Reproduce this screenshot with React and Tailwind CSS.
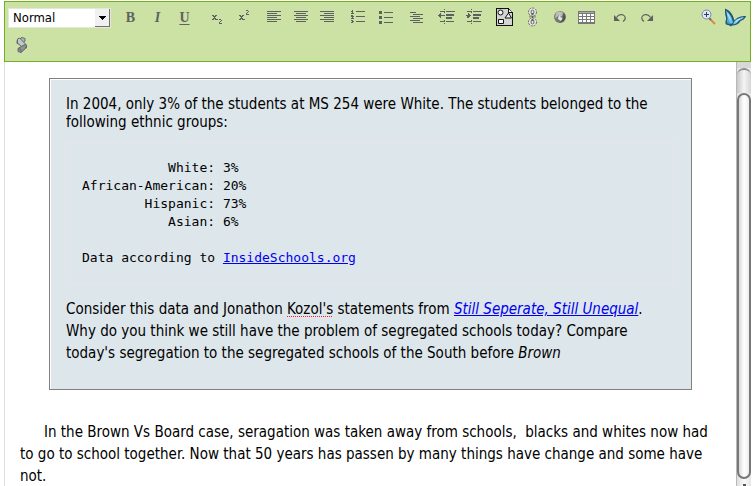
import React from "react";

const INK = "#5f6160";

function Tool({ label, children }) {
  return (
    <button type="button" aria-label={label} title={label} className="block h-[27px] w-[27px] shrink-0">
      <svg width="27" height="27" viewBox="0 0 27 27" shapeRendering="crispEdges" fill={INK}>
        {children}
      </svg>
    </button>
  );
}

/* Each bar is [x, y, width], one pixel tall. */
function Bars({ rows }) {
  return rows.map(([x, y, w]) => <rect key={x + "-" + y} x={x} y={y} width={w} height="1" />);
}

function Letter({ label, char, className }) {
  return (
    <button
      type="button"
      aria-label={label}
      className={"h-[27px] w-[27px] shrink-0 text-center font-['Liberation_Serif',serif] text-[14px] leading-[27px] font-bold text-[#5f6160] " + className}
    >
      {char}
    </button>
  );
}

function Two({ x, y }) {
  return <path d={`M${x} ${y}h2v1h1v1h-1v1h-1v1h2v1h-3v-2h1v-1h1v-1h-2z`} />;
}

function SmallX() {
  return <path d="M5 11h2v1h1v-1h2v1h-1v1h-1v1h1v1h2v1h-3v-1h-1v1h-2v-1h1v-1h1v-1h-1v-1h-1z" />;
}

function Indent({ label, flip }) {
  return (
    <Tool label={label}>
      <Bars rows={[[6, 7, 4], [12, 7, 9], [12, 10, 8], [12, 11, 8], [12, 13, 6], [12, 14, 6], [6, 17, 4], [12, 17, 8]]} />
      <path d="M10 5h1v1h-1zM10 7h1v2h-1zM10 16h1v2h-1zM10 19h1v1h-1z" />
      {flip ? (
        <path d="M5 11h2v-1h1v1h2v1h-2v1h-1v1h-1v-2h-1zM7 9h1v1h1v1h1v1h-1v1h-1v1h-1z" />
      ) : (
        <path d="M4 11h1v-1h1v-1h1v2h4v1h-4v2h-1v-1h-1v-1h-1z" />
      )}
    </Tool>
  );
}

function Toolbar() {
  return (
    <div role="toolbar" aria-label="Formatting" className="border border-[#72b01d] bg-[#cce2a5] pb-[3px]">
      <div className="flex items-start pt-[2px] pl-[3px]">
        <div className="relative mt-[4px] h-[20px] w-[103px] shrink-0 border border-[#e3e8da] bg-white">
          <select
            aria-label="Paragraph style"
            className="block h-[18px] w-full appearance-none pl-[4px] font-['DejaVu_Sans_Condensed','DejaVu_Sans',sans-serif] text-[13px] leading-[18px] text-black"
          >
            <option>Normal</option>
          </select>
          <span className="pointer-events-none absolute top-0 right-0 flex h-[18px] w-[15px] items-center justify-center border-r border-b border-[#6f6f6f] bg-[#f0f0f0]">
            <svg width="7" height="4" viewBox="0 0 7 4" shapeRendering="crispEdges">
              <path d="M0 0h7v1h-1v1h-1v1h-1v1h-1v-1h-1v-1h-1v-1h-1z" fill="#000" />
            </svg>
          </span>
        </div>
        <div className="ml-[6px] flex">
          <Letter label="Bold" char="B" className="" />
          <Letter label="Italic" char="I" className="italic" />
          <Letter label="Underline" char="U" className="underline underline-offset-2" />
        </div>
        <div className="ml-[6px] flex">
          <Tool label="Subscript">
            <g transform="translate(3 0)"><SmallX /><Two x={12} y={15} /></g>
          </Tool>
          <Tool label="Superscript">
            <g transform="translate(3 0)"><SmallX /><Two x={12} y={6} /></g>
          </Tool>
        </div>
        <div className="ml-[3px] flex">
          <Tool label="Align left">
            <Bars rows={[[6, 7, 14], [6, 9, 10], [6, 11, 14], [6, 13, 10], [6, 15, 14], [6, 17, 10]]} />
          </Tool>
          <Tool label="Align center">
            <Bars rows={[[6, 7, 14], [8, 9, 10], [6, 11, 14], [8, 13, 10], [6, 15, 14], [8, 17, 10]]} />
          </Tool>
          <Tool label="Align right">
            <Bars rows={[[5, 7, 14], [9, 9, 10], [5, 11, 14], [9, 13, 10], [5, 15, 14], [9, 17, 10]]} />
          </Tool>
        </div>
        <div className="ml-[3px] flex">
          <Tool label="Numbered list">
            <Bars rows={[[11, 7, 9], [11, 12, 9], [11, 17, 9]]} />
            <path d="M7 6h1v3h1v1h-3v-1h1v-1h-1v-1h1zM6 11h2v1h1v1h-1v1h1v1h-3v-1h1v-1h-1zM6 16h2v1h1v1h-1v1h-2v-1h1v-1h-1z" />
          </Tool>
          <Tool label="Bulleted list">
            <Bars rows={[[12, 8, 9], [12, 13, 9], [12, 18, 9]]} />
            <path d="M7 7h3v3h-3zM7 12h3v3h-3zM7 17h3v3h-3z" />
          </Tool>
        </div>
        <div className="ml-[4px] flex">
          <Tool label="Block quote">
            <Bars rows={[[7, 8, 6], [10, 10, 10], [7, 12, 10], [10, 14, 10], [7, 16, 10], [10, 18, 10]]} />
          </Tool>
        </div>
        <div className="ml-[4px] flex">
          <Indent label="Decrease indent" />
          <Indent label="Increase indent" flip />
        </div>
        <div className="ml-[3px] flex">
          <Tool label="Insert image">
            <path d="M5 4h13v1h1v1h1v1h1v1h1v14h-17z" fill="#111" />
            <path d="M6 5h11v4h4v12h-15z" fill="#d4d5d2" />
            <g fill="#f1f1ee" stroke="#111" strokeWidth="1" shapeRendering="auto">
              <circle cx="9.500" cy="8.500" r="2.500" />
              <path d="M17.500 9l-3.500 5h6.500z" />
              <path d="M7.500 15.500h5v4h-5z" />
              <path d="M17.500 5v3.500h4" fill="#ffffff" />
            </g>
          </Tool>
          <Tool label="Insert link">
            <g fill="none" stroke="#62655d" strokeWidth="1" shapeRendering="auto">
              <ellipse cx="14.500" cy="8" rx="4" ry="4" fill="#e7e9e2" strokeDasharray="2 1" />
              <ellipse cx="14.500" cy="18" rx="4" ry="4" fill="#e7e9e2" strokeDasharray="2 1" />
              <path d="M12 11.500v3M17 11.500v3" strokeDasharray="2 1" />
              <ellipse cx="14.500" cy="8" rx="1.500" ry="2" />
              <ellipse cx="14.500" cy="18" rx="1.500" ry="2" />
              <path d="M14.500 9v8" strokeWidth="2" strokeDasharray="2 1" />
            </g>
          </Tool>
          <Tool label="Web page">
            <g shapeRendering="auto">
              <circle cx="15" cy="13" r="6" fill="#777975" />
              <path d="M11 9c2-2 5-2 7 0l-1 3-2 1-1-3-2 3-2 1z" fill="#bdbeb8" />
              <path d="M14 9l1 4 3 1-2 3-3-2z" fill="#e3e4df" />
              <path d="M19 9c2 3 2 7-2 9l-3 1 3-3z" fill="#50524f" />
            </g>
          </Tool>
          <Tool label="Insert table">
            <rect x="6" y="7" width="17" height="13" fill="#777" />
            <rect x="7" y="8" width="15" height="1" fill="#aaa" />
            {[10, 13, 16].map((y) =>
              [7, 11, 15, 19].map((x) => <rect key={x + "," + y} x={x} y={y} width="3" height="2" fill="#fff" />)
            )}
          </Tool>
        </div>
        <div className="ml-[7px] flex">
          <Tool label="Undo">
            <g shapeRendering="auto">
              <path d="M8 11v6h6z" />
              <path d="M10.500 13.500c2-3 6-4 8-1.500 1.500 2 .500 4-1.500 5.500" fill="none" stroke={INK} strokeWidth="1.200" />
            </g>
          </Tool>
          <Tool label="Redo">
            <g shapeRendering="auto">
              <path d="M20 11v6h-6z" />
              <path d="M17.500 13.500c-2-3-6-4-8-1.500-1.500 2-.500 4 1.500 5.500" fill="none" stroke={INK} strokeWidth="1.200" />
            </g>
          </Tool>
        </div>
        <div className="ml-auto flex pr-px">
          <Tool label="Zoom">
            <g shapeRendering="auto">
              <path d="M15 15l5 5" stroke="#d98b45" strokeWidth="2" />
              <path d="M14 14l2 2" stroke="#72717d" strokeWidth="2" />
              <circle cx="11.500" cy="10.500" r="4.500" fill="#dce9f8" stroke="#7a86a5" />
              <path d="M11.500 8v5M9 10.500h5" stroke="#323b58" />
            </g>
          </Tool>
          <Tool label="About">
            <g shapeRendering="auto">
              <path d="M3 4.500c4 1.500 8 5 9.500 12 3-3.500 6-4.500 11.500-4.500-1 3.500-3.500 4-5.500 5-2 3.500-5 4.500-8.500 4.500l-1 1-1.500-1-3.500-1c-1.500-3 .500-4 0-7-1-3-1-5-1-9z" fill="#24566f" />
              <path d="M4 6.500c4 3 6 7 7 12l-2 1.500c-4-3-3.500-8-5-13.500z" fill="#6cc3ec" />
              <path d="M5 14l3.500 6-3-.500c-1-2-.500-3-.500-5.500z" fill="#4fa6d2" />
              <path d="M12 18c2.500-3.500 6-4.500 10-5-1.500 2.500-3.500 2-5 3.500-1.500 2.500-3.500 3.500-6 4z" fill="#7ccdf2" />
              <path d="M5.500 9.500l3 6M13.500 17.500l4.500-2.500" stroke="#c6efff" />
            </g>
          </Tool>
        </div>
      </div>
      <div className="flex pl-[3px]">
        <Tool label="Spelling">
          <g shapeRendering="auto" stroke="#666a68" strokeWidth="1" fill="#aeb4b8">
            <path d="M9 9.500l5-3 3 1v2.500l-4 3.500-4-1z" />
            <path d="M9.500 8l2-1 7 7v3l-2.500 1-6.500-6z" fill="#c1c7cb" />
            <path d="M17 13.500l1.500 1-1 3-4.500 4-3-1v-3l4-2.500z" fill="#8c9295" />
            <path d="M10 17.500l3 1v3" fill="none" />
          </g>
        </Tool>
      </div>
    </div>
  );
}

function Scrollbar() {
  return (
    <div
      aria-hidden="true"
      className="flex w-[15px] shrink-0 flex-col border-l border-[#b8b8b8] bg-linear-to-r from-[#dedede] via-[#fafafa] to-[#e6e6e6]"
    >
      <div className="h-[6px] bg-[#d8d8d8]" />
      <div className="h-[25px] rounded-t-full border-t-2 border-[#8c8c8c] bg-linear-to-r from-[#c8c8c8] via-[#f4f4f4] to-[#d5d5d5]" />
      <div className="flex-1 rounded-full border-2 border-[#777777] bg-linear-to-r from-[#d8d8d8] via-white to-[#eeeeee]" />
      <div className="flex h-[7px] items-end justify-center">
        <span className="h-[2px] w-[3px] bg-[#555555]" />
      </div>
    </div>
  );
}

function Prompt() {
  return (
    <section className="mr-[44px] ml-[44px] border border-[#808080] bg-[#dde6eb] px-[16px] pt-[16px] pb-[25px] shadow-[inset_1px_1px_0_#ffffff]">
      <p className="leading-[18px]">
        In 2004, only 3% of the students at MS 254 were White. The students belonged to the
        <br />
        following ethnic groups:
      </p>
      <div className="mt-[11px] border border-[#e6e6e6] px-[15px] py-[16px] font-['DejaVu_Sans_Mono',monospace] text-[13px] leading-[18px]">
        <pre className="font-['DejaVu_Sans_Mono',monospace]">
          {"           White: 3%\nAfrican-American: 20%\n        Hispanic: 73%\n           Asian: 6%"}
        </pre>
        <p className="mt-[18px]">
          Data according to{" "}
          <a href="#insideschools" className="text-[#0000ee] underline">InsideSchools.org</a>
        </p>
      </div>
      <p className="mt-[14px] leading-[22px]">
        Consider this data and Jonathon{" "}
        <span className="underline decoration-[#ee2222] decoration-dotted decoration-1 underline-offset-2">Kozol's</span> statements from{" "}
        <a href="#article" className="text-[#0000ee] italic underline">Still Seperate, Still Unequal</a>.
        <br />
        Why do you think we still have the problem of segregated schools today? Compare
        <br />
        today's segregation to the segregated schools of the South before <em>Brown</em>
      </p>
    </section>
  );
}

export default function App() {
  return (
    <div className="flex h-screen flex-col overflow-hidden bg-white pt-px pr-[5px] pl-[4px] font-['DejaVu_Sans_Condensed','DejaVu_Sans',sans-serif] text-[15px] text-black">
      <Toolbar />
      <div className="flex min-h-0 flex-1">
        <main className="min-w-0 flex-1 overflow-hidden border-l border-[#dddddd] pt-[16px] whitespace-nowrap">
          <Prompt />
          <p className="mt-[31px] pl-[15px] indent-[24px] leading-[22px]">
            In the Brown Vs Board case, seragation was taken away from schools,&nbsp; blacks and whites now had
            <br />
            to go to school together. Now that 50 years has passen by many things have change and some have
            <br />
            not.
          </p>
        </main>
        <Scrollbar />
      </div>
    </div>
  );
}
